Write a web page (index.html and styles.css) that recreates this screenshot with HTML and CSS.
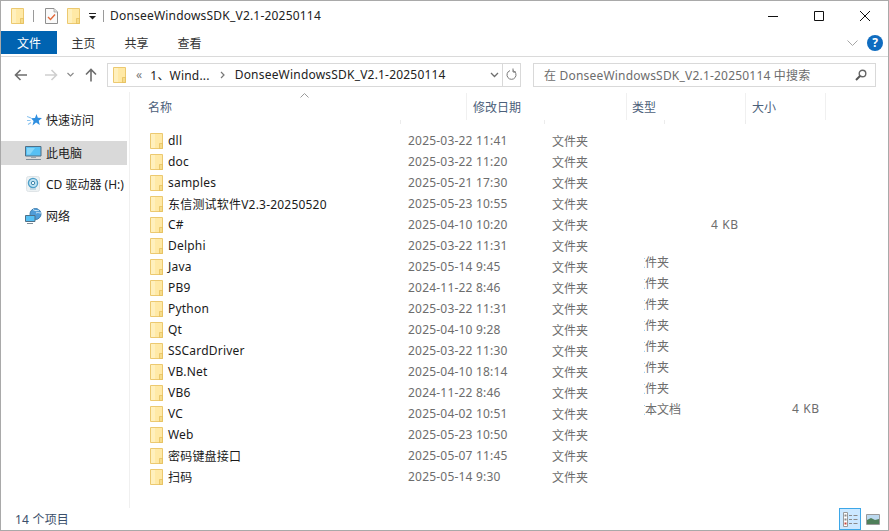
FILE: index.html
```html
<!DOCTYPE html>
<html lang="zh-CN">

<head>
    <meta charset="UTF-8">
    <title>DonseeWindowsSDK_V2.1-20250114</title>
    <link rel="stylesheet" href="styles.css">
</head>

<body>
    <svg class="defs" width="0" height="0">
        <symbol id="folder" viewBox="0 0 13 16">
            <path d="M.5.500h12v15H.5z" fill="#ffe9a6" stroke="#ecc970" />
            <path d="M1 1h4v14H1z" fill="#fff0bd" />
            <path d="M9.500 10.500h3v5h-3z" fill="#f6dc8a" stroke="#e4bb58" stroke-width=".7" />
        </symbol>
    </svg>

    <div class="window">
        <div class="title-bar">
            <svg class="ic-folder"><use href="#folder" /></svg>
            <span class="qat-sep"></span>
            <svg class="ic-check" width="13" height="16" viewBox="0 0 13 16">
                <path d="M.5.500h8.500l3.500 3.500v11.500H.5z" fill="#fafafa" stroke="#8f8f8f" />
                <path d="M9 .5v3.500h3.500" fill="#e2e2e2" stroke="#9a9a9a" stroke-width=".7" />
                <path d="M3 9l2.500 2.500L10 6.500" fill="none" stroke="#e2693a" stroke-width="1.400" />
            </svg>
            <svg class="ic-folder ic-folder2"><use href="#folder" /></svg>
            <svg class="ic-drop" width="7" height="8" viewBox="0 0 7 8">
                <path d="M0 1.500h7" stroke="#222" />
                <path d="M0 4h7L3.500 7.500z" fill="#222" />
            </svg>
            <span class="qat-sep sep-title"></span>
            <span class="title-text">DonseeWindowsSDK_V2.1-20250114</span>
            <div class="caption-btns">
                <span class="caption-btn">
                    <svg width="10" height="10" viewBox="0 0 10 10"><path d="M0 5.500h10" stroke="#111" /></svg>
                </span>
                <span class="caption-btn">
                    <svg width="10" height="10" viewBox="0 0 10 10"><path d="M.5.500h9v9h-9z" fill="none" stroke="#111" /></svg>
                </span>
                <span class="caption-btn">
                    <svg width="10" height="10" viewBox="0 0 10 10"><path d="M0 0l10 10M10 0L0 10" stroke="#111" /></svg>
                </span>
            </div>
        </div>

        <div class="ribbon">
            <span class="tab tab-file">文件</span>
            <span class="tab">主页</span>
            <span class="tab">共享</span>
            <span class="tab">查看</span>
            <svg class="ribbon-chevron" width="11" height="6" viewBox="0 0 11 6">
                <path d="M.5.500l5 5 5-5" fill="none" stroke="#a6a6a6" />
            </svg>
            <span class="help">?</span>
        </div>

        <div class="address-row">
            <div class="nav-btns">
                <svg width="14" height="12" viewBox="0 0 14 12">
                    <path d="M13 6H2M6.500 1L1.500 6l5 5" fill="none" stroke="#6d6d6d" stroke-width="1.600" />
                </svg>
                <svg class="nav-fwd" width="14" height="12" viewBox="0 0 14 12">
                    <path d="M1 6h11M7.500 1l5 5-5 5" fill="none" stroke="#cfcfcf" stroke-width="1.600" />
                </svg>
                <svg class="nav-more" width="7" height="5" viewBox="0 0 7 5">
                    <path d="M.5 1l3 3 3-3" fill="none" stroke="#8a8a8a" stroke-width="1.200" />
                </svg>
                <svg class="nav-up" width="12" height="14" viewBox="0 0 12 14">
                    <path d="M6 13.500V2M1 6.500l5-5 5 5" fill="none" stroke="#6d6d6d" stroke-width="1.600" />
                </svg>
            </div>
            <div class="address-box">
                <svg class="ic-folder"><use href="#folder" /></svg>
                <span class="crumb-more">«</span>
                <span class="crumb">1、Wind...</span>
                <svg class="crumb-arrow" width="5" height="8" viewBox="0 0 5 8">
                    <path d="M1 1l3 3-3 3" fill="none" stroke="#777" stroke-width="1.200" />
                </svg>
                <span class="crumb crumb-last">DonseeWindowsSDK_V2.1-20250114</span>
                <svg class="addr-drop" width="9" height="6" viewBox="0 0 9 6">
                    <path d="M1 1l3.500 3.500L8 1" fill="none" stroke="#6d6d6d" stroke-width="1.300" />
                </svg>
                <span class="refresh">
                    <svg width="11" height="13" viewBox="0 0 11 13">
                        <path d="M4 2.600a4.500 4.500 0 1 0 3 0M7 .5v3.500h3" fill="none" stroke="#777" />
                    </svg>
                </span>
            </div>
            <div class="search-box">
                <span class="search-text">在 DonseeWindowsSDK_V2.1-20250114 中搜索</span>
                <svg width="12" height="12" viewBox="0 0 12 12">
                    <circle cx="7.500" cy="4.500" r="3.300" fill="none" stroke="#666" stroke-width="1.400" />
                    <path d="M5 7L1 11" stroke="#555" stroke-width="2" />
                </svg>
            </div>
        </div>

        <div class="main">
            <nav class="nav-pane">
                <div class="nav-item nav-quick">
                    <svg width="15" height="15" viewBox="0 0 15 15">
                        <path d="M9.500 1l1.300 3.800 4.200.3-3.300 2.600 1.100 4.300-3.700-2.400-3.600 2.900 1.100-4.400L4 5.200l4-.3z" fill="#2f8fe0" />
                        <path d="M0 3.500l4 1.500M0 7.500h3.500M1 11.500l3-2" stroke="#8cc4ef" stroke-width="1.100" />
                    </svg>
                    <span>快速访问</span>
                </div>
                <div class="nav-item nav-pc is-selected">
                    <svg width="17" height="16" viewBox="0 0 17 16">
                        <path d="M.5 1.500h15.500v9.500H.5z" fill="#56c0f4" stroke="#4f6f86" />
                        <path d="M2 3h8l-5 6.500H2z" fill="#86d6f8" />
                        <path d="M6 12.500h5" stroke="#9aa5ad" />
                        <path d="M1 14.500h15" stroke="#7d8c98" />
                    </svg>
                    <span>此电脑</span>
                </div>
                <div class="nav-item nav-cd">
                    <svg width="14" height="16" viewBox="0 0 14 16">
                        <rect x=".5" y=".5" width="13" height="15" rx="2" fill="#edf2f4" stroke="#dfe4e7" />
                        <circle cx="7" cy="7" r="4.600" fill="#bfe2f2" stroke="#4f9fc8" stroke-width="1.300" />
                        <circle cx="7" cy="7" r="1.700" fill="#f3fafd" stroke="#3f86aa" />
                        <path d="M4 13h6" stroke="#9cc0d2" />
                    </svg>
                    <span>CD 驱动器 (H:)</span>
                </div>
                <div class="nav-item nav-net">
                    <svg width="17" height="16" viewBox="0 0 17 16">
                        <circle cx="10.500" cy="6" r="5.500" fill="#4f9cd8" stroke="#3f7fb0" />
                        <path d="M8 1.500c2 1.500 4 1.500 6 .5M11 5c2-1 3 0 5 0" fill="none" stroke="#d6ecf9" />
                        <path d="M.5 7.500h9.500v6H.5z" fill="#56c0f4" stroke="#4f6f86" />
                        <path d="M2 15.500h6" stroke="#7d8c98" />
                    </svg>
                    <span>网络</span>
                </div>
            </nav>

            <section class="content">
                <div class="col-head">
                    <span class="head-cell head-name">名称
                        <svg class="sort-mark" width="9" height="5" viewBox="0 0 9 5">
                            <path d="M.5 4.500l4-4 4 4" fill="none" stroke="#9a9a9a" />
                        </svg>
                    </span>
                    <span class="head-cell head-date">修改日期</span>
                    <span class="head-cell head-type">类型</span>
                    <span class="head-cell head-size">大小</span>
                </div>
                <div class="head-ticks">
                    <span class="tick tick-1"></span>
                    <span class="tick tick-2"></span>
                    <span class="tick tick-3"></span>
                    <span class="tick tick-4"></span>
                </div>

                <div class="file-list">
                    <div class="file-row"><svg class="ic-folder"><use href="#folder" /></svg><span>dll</span><span class="date">2025-03-22 11:41</span><span class="type">文件夹</span></div>
                    <div class="file-row"><svg class="ic-folder"><use href="#folder" /></svg><span>doc</span><span class="date">2025-03-22 11:20</span><span class="type">文件夹</span></div>
                    <div class="file-row"><svg class="ic-folder"><use href="#folder" /></svg><span>samples</span><span class="date">2025-05-21 17:30</span><span class="type">文件夹</span></div>
                    <div class="file-row"><svg class="ic-folder"><use href="#folder" /></svg><span>东信测试软件V2.3-20250520</span><span class="date">2025-05-23 10:55</span><span class="type">文件夹</span></div>
                    <div class="file-row"><svg class="ic-folder"><use href="#folder" /></svg><span>C#</span><span class="date">2025-04-10 10:20</span><span class="type">文件夹</span><span class="size">4 KB</span></div>
                    <div class="file-row"><svg class="ic-folder"><use href="#folder" /></svg><span>Delphi</span><span class="date">2025-03-22 11:31</span><span class="type">文件夹</span></div>
                    <div class="file-row"><svg class="ic-folder"><use href="#folder" /></svg><span>Java</span><span class="date">2025-05-14 9:45</span><span class="type">文件夹</span><span class="ghost"><span>文件夹</span></span></div>
                    <div class="file-row"><svg class="ic-folder"><use href="#folder" /></svg><span>PB9</span><span class="date">2024-11-22 8:46</span><span class="type">文件夹</span><span class="ghost"><span>文件夹</span></span></div>
                    <div class="file-row"><svg class="ic-folder"><use href="#folder" /></svg><span>Python</span><span class="date">2025-03-22 11:31</span><span class="type">文件夹</span><span class="ghost"><span>文件夹</span></span></div>
                    <div class="file-row"><svg class="ic-folder"><use href="#folder" /></svg><span>Qt</span><span class="date">2025-04-10 9:28</span><span class="type">文件夹</span><span class="ghost"><span>文件夹</span></span></div>
                    <div class="file-row"><svg class="ic-folder"><use href="#folder" /></svg><span>SSCardDriver</span><span class="date">2025-03-22 11:30</span><span class="type">文件夹</span><span class="ghost"><span>文件夹</span></span></div>
                    <div class="file-row"><svg class="ic-folder"><use href="#folder" /></svg><span>VB.Net</span><span class="date">2025-04-10 18:14</span><span class="type">文件夹</span><span class="ghost"><span>文件夹</span></span></div>
                    <div class="file-row"><svg class="ic-folder"><use href="#folder" /></svg><span>VB6</span><span class="date">2024-11-22 8:46</span><span class="type">文件夹</span><span class="ghost"><span>文件夹</span></span></div>
                    <div class="file-row"><svg class="ic-folder"><use href="#folder" /></svg><span>VC</span><span class="date">2025-04-02 10:51</span><span class="type">文件夹</span><span class="ghost ghost-wide"><span>文本文档</span></span><span class="ghost-size">4 KB</span></div>
                    <div class="file-row"><svg class="ic-folder"><use href="#folder" /></svg><span>Web</span><span class="date">2025-05-23 10:50</span><span class="type">文件夹</span></div>
                    <div class="file-row"><svg class="ic-folder"><use href="#folder" /></svg><span>密码键盘接口</span><span class="date">2025-05-07 11:45</span><span class="type">文件夹</span></div>
                    <div class="file-row"><svg class="ic-folder"><use href="#folder" /></svg><span>扫码</span><span class="date">2025-05-14 9:30</span><span class="type">文件夹</span></div>
                </div>
            </section>
        </div>

        <div class="status-bar">
            <span class="status-text">14 个项目</span>
            <span class="view-btn view-details">
                <svg width="15" height="15" viewBox="0 0 15 15">
                    <path d="M.5.500h4v14h-4z" fill="#fff" stroke="#9a9a9a" />
                    <path d="M1.500 2.500h2v2h-2zM1.500 6.500h2v2h-2z" fill="#8a8a8a" />
                    <path d="M1.500 10.500h2v2h-2z" fill="#c8453a" />
                    <path d="M6 3.500h3M10.500 3.500h4M6 7.500h3M10.500 7.500h4M6 11.500h3M10.500 11.500h4" stroke="#8a8a8a" />
                </svg>
            </span>
            <span class="view-btn view-thumbs">
                <svg width="14" height="11" viewBox="0 0 14 11">
                    <path d="M.5.500h13v10H.5z" fill="#bcd9ef" stroke="#9a9a9a" />
                    <path d="M1 6l4-2 4 2 4-1v5H1z" fill="#4f7f5a" />
                </svg>
            </span>
        </div>
    </div>
</body>

</html>
```

FILE: styles.css
```css
* {
    box-sizing: border-box;
}

html,
body {
    margin: 0;
    height: 100%;
    overflow: hidden;
}

body {
    font-family: "Noto Sans", "Noto Sans CJK SC", sans-serif;
    font-size: 12px;
    letter-spacing: 0.2px;
    color: #1a1a1a;
    background: #ffffff;
}

.defs {
    position: absolute;
}

.window {
    height: 531px;
    display: flex;
    flex-direction: column;
    border: 1px solid #a9a9a9;
    background: #ffffff;
}

.ic-folder {
    width: 13px;
    height: 16px;
    flex-shrink: 0;
}

/* title bar */
.title-bar {
    height: 30px;
    display: flex;
    align-items: center;
    padding-left: 10px;
}

.qat-sep {
    width: 1px;
    height: 12px;
    margin: 0 11px 0 9px;
    background: #9a9a9a;
}

.ic-folder2 {
    margin-left: 9px;
}

.ic-drop {
    margin-left: 9px;
}

.sep-title {
    margin: 0 6px 0 7px;
}

.title-text {
    margin-bottom: 2px;
    color: #222222;
}

.caption-btns {
    display: flex;
    margin-left: auto;
}

.caption-btn {
    width: 46px;
    height: 30px;
    display: flex;
    align-items: center;
    justify-content: center;
}

/* ribbon tabs */
.ribbon {
    height: 26px;
    display: flex;
    align-items: flex-start;
    letter-spacing: 0;
    border-bottom: 1px solid #dadada;
}

.tab {
    height: 23px;
    width: 53px;
    display: flex;
    align-items: center;
    justify-content: center;
    color: #333333;
}

.tab-file {
    width: 56px;
    background: #0063b1;
    color: #ffffff;
}

.ribbon-chevron {
    margin: 9px 0 0 auto;
}

.help {
    width: 16px;
    height: 16px;
    margin: 4px 5px 0 9px;
    border-radius: 50%;
    background: #0f6cc0;
    color: #ffffff;
    font-weight: 700;
    line-height: 16px;
    text-align: center;
}

/* address row */
.address-row {
    height: 35px;
    display: flex;
    align-items: center;
}

.nav-btns {
    width: 106px;
    display: flex;
    align-items: center;
    padding-left: 13px;
}

.nav-fwd {
    margin-left: 16px;
}

.nav-more {
    margin-left: 9px;
}

.nav-up {
    margin-left: 11px;
}

.address-box,
.search-box {
    height: 24px;
    display: flex;
    align-items: center;
    border: 1px solid #d9d9d9;
}

.address-box {
    width: 414px;
    padding-left: 5px;
}

.crumb-more {
    margin-left: 10px;
    color: #777777;
}

.crumb {
    margin-left: 8px;
    color: #222222;
}

.crumb-arrow {
    margin-left: 10px;
}

.crumb-last {
    margin-left: 10px;
}

.addr-drop {
    margin-left: auto;
}

.refresh {
    width: 18px;
    height: 22px;
    margin-left: 3px;
    display: flex;
    align-items: center;
    justify-content: center;
    border-left: 1px solid #d9d9d9;
}

.search-box {
    width: 343px;
    margin-left: 12px;
    padding: 0 8px 0 10px;
    justify-content: space-between;
}

.search-text {
    color: #6d6d6d;
}

/* nav pane */
.main {
    flex: 1;
    min-height: 0;
    display: flex;
}

.nav-pane {
    width: 129px;
    padding: 16px 2px 0 0;
    letter-spacing: 0;
    border-right: 1px solid #f0f0f0;
}

.nav-item {
    height: 24px;
    display: flex;
    align-items: center;
    gap: 4px;
    padding-left: 26px;
    color: #222222;
    white-space: nowrap;
}

.nav-pc {
    margin-top: 9px;
    padding-left: 24px;
}

.nav-pc.is-selected {
    background: #d9d9d9;
}

.nav-cd {
    margin-top: 7px;
    padding-left: 25px;
    gap: 6px;
}

.nav-net {
    margin-top: 8px;
    padding-left: 24px;
}

/* columns */
.content {
    flex: 1;
    min-width: 0;
}

.col-head {
    height: 28px;
    padding-top: 1px;
    display: flex;
    letter-spacing: 0;
    color: #4c607a;
}

.head-cell {
    height: 27px;
    display: flex;
    align-items: center;
    border-right: 1px solid #f0f0f0;
}

.head-name {
    position: relative;
    width: 337px;
    padding-left: 18px;
}

.sort-mark {
    position: absolute;
    left: 170px;
    top: 0;
}

.head-date {
    width: 160px;
    padding-left: 6px;
}

.head-type {
    width: 119px;
    padding-left: 5px;
}

.head-size {
    width: 80px;
    padding-left: 6px;
}

.head-ticks {
    height: 10px;
    display: flex;
}

.tick {
    height: 4px;
    border-right: 1px solid #ececec;
}

.tick-1 {
    width: 271px;
}

.tick-2 {
    width: 144px;
}

.tick-3 {
    width: 120px;
}

.tick-4 {
    width: 81px;
}

/* file rows */
.file-row {
    position: relative;
    height: 21px;
    display: grid;
    grid-template-columns: 18px 240px 144px 159px auto;
    align-items: center;
    margin-left: 20px;
    white-space: nowrap;
}

.date,
.type,
.size,
.ghost,
.ghost-size {
    color: #6d6d6d;
}

.type,
.ghost {
    letter-spacing: 0;
}

.size,
.ghost-size {
    letter-spacing: 0.6px;
}

.ghost {
    position: absolute;
    left: 494px;
    top: -3px;
    width: 25px;
    overflow: hidden;
}

.ghost-wide {
    width: 37px;
}

.ghost span {
    display: block;
    margin-left: -11px;
}

.ghost-size {
    position: absolute;
    left: 642px;
    top: -3px;
}

/* status bar */
.status-bar {
    height: 22px;
    display: flex;
    align-items: center;
    flex-shrink: 0;
    padding-left: 14px;
}

.status-text {
    color: #3b4f6b;
    margin-right: auto;
}

.view-btn {
    display: flex;
    align-items: center;
    justify-content: center;
}

.view-details {
    width: 22px;
    height: 22px;
    background: #cce8ff;
    border: 1px solid #3da7e8;
}

.view-thumbs {
    width: 14px;
    height: 22px;
    margin: 0 8px 0 5px;
}
```
